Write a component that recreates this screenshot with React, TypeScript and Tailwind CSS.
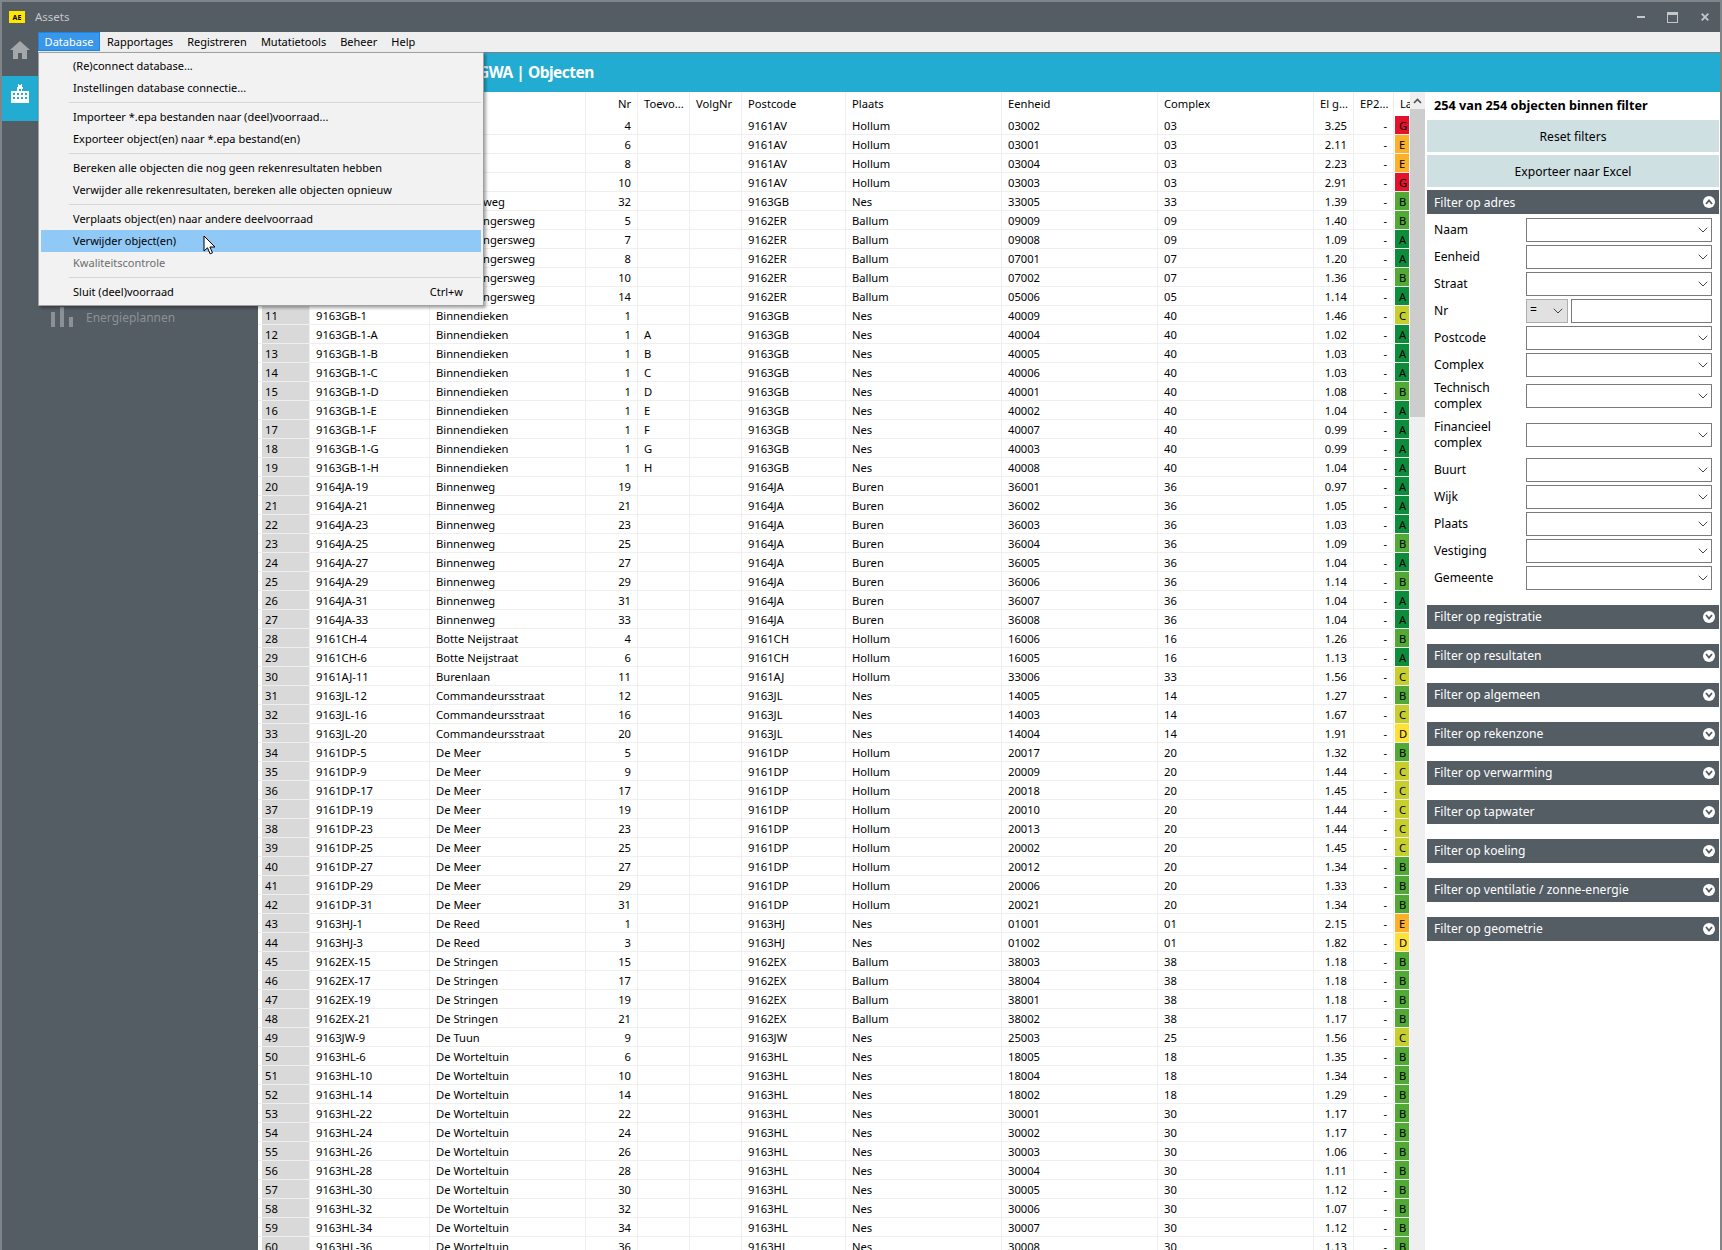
import { ChevronDown } from 'lucide-react';

const FONT = "font-['Noto_Sans','Open_Sans',sans-serif]";

// code|straat|nr|toev|postcode|plaats|eenheid|complex|el|label
const ROWS = [
  '|\u00a0|4||9161AV|Hollum|03002|03|3.25|G',
  '|\u00a0|6||9161AV|Hollum|03001|03|2.11|E',
  '|\u00a0|8||9161AV|Hollum|03004|03|2.23|E',
  '|\u00a0|10||9161AV|Hollum|03003|03|2.91|G',
  '|~weg|32||9163GB|Nes|33005|33|1.39|B',
  '|~ngersweg|5||9162ER|Ballum|09009|09|1.40|B',
  '|~ngersweg|7||9162ER|Ballum|09008|09|1.09|A',
  '|~ngersweg|8||9162ER|Ballum|07001|07|1.20|A',
  '|~ngersweg|10||9162ER|Ballum|07002|07|1.36|B',
  '|~ngersweg|14||9162ER|Ballum|05006|05|1.14|A',
  '9163GB-1|Binnendieken|1||9163GB|Nes|40009|40|1.46|C',
  '9163GB-1-A|Binnendieken|1|A|9163GB|Nes|40004|40|1.02|A',
  '9163GB-1-B|Binnendieken|1|B|9163GB|Nes|40005|40|1.03|A',
  '9163GB-1-C|Binnendieken|1|C|9163GB|Nes|40006|40|1.03|A',
  '9163GB-1-D|Binnendieken|1|D|9163GB|Nes|40001|40|1.08|B',
  '9163GB-1-E|Binnendieken|1|E|9163GB|Nes|40002|40|1.04|A',
  '9163GB-1-F|Binnendieken|1|F|9163GB|Nes|40007|40|0.99|A',
  '9163GB-1-G|Binnendieken|1|G|9163GB|Nes|40003|40|0.99|A',
  '9163GB-1-H|Binnendieken|1|H|9163GB|Nes|40008|40|1.04|A',
  '9164JA-19|Binnenweg|19||9164JA|Buren|36001|36|0.97|A',
  '9164JA-21|Binnenweg|21||9164JA|Buren|36002|36|1.05|A',
  '9164JA-23|Binnenweg|23||9164JA|Buren|36003|36|1.03|A',
  '9164JA-25|Binnenweg|25||9164JA|Buren|36004|36|1.09|B',
  '9164JA-27|Binnenweg|27||9164JA|Buren|36005|36|1.04|A',
  '9164JA-29|Binnenweg|29||9164JA|Buren|36006|36|1.14|B',
  '9164JA-31|Binnenweg|31||9164JA|Buren|36007|36|1.04|A',
  '9164JA-33|Binnenweg|33||9164JA|Buren|36008|36|1.04|A',
  '9161CH-4|Botte Neijstraat|4||9161CH|Hollum|16006|16|1.26|B',
  '9161CH-6|Botte Neijstraat|6||9161CH|Hollum|16005|16|1.13|A',
  '9161AJ-11|Burenlaan|11||9161AJ|Hollum|33006|33|1.56|C',
  '9163JL-12|Commandeursstraat|12||9163JL|Nes|14005|14|1.27|B',
  '9163JL-16|Commandeursstraat|16||9163JL|Nes|14003|14|1.67|C',
  '9163JL-20|Commandeursstraat|20||9163JL|Nes|14004|14|1.91|D',
  '9161DP-5|De Meer|5||9161DP|Hollum|20017|20|1.32|B',
  '9161DP-9|De Meer|9||9161DP|Hollum|20009|20|1.44|C',
  '9161DP-17|De Meer|17||9161DP|Hollum|20018|20|1.45|C',
  '9161DP-19|De Meer|19||9161DP|Hollum|20010|20|1.44|C',
  '9161DP-23|De Meer|23||9161DP|Hollum|20013|20|1.44|C',
  '9161DP-25|De Meer|25||9161DP|Hollum|20002|20|1.45|C',
  '9161DP-27|De Meer|27||9161DP|Hollum|20012|20|1.34|B',
  '9161DP-29|De Meer|29||9161DP|Hollum|20006|20|1.33|B',
  '9161DP-31|De Meer|31||9161DP|Hollum|20021|20|1.34|B',
  '9163HJ-1|De Reed|1||9163HJ|Nes|01001|01|2.15|E',
  '9163HJ-3|De Reed|3||9163HJ|Nes|01002|01|1.82|D',
  '9162EX-15|De Stringen|15||9162EX|Ballum|38003|38|1.18|B',
  '9162EX-17|De Stringen|17||9162EX|Ballum|38004|38|1.18|B',
  '9162EX-19|De Stringen|19||9162EX|Ballum|38001|38|1.18|B',
  '9162EX-21|De Stringen|21||9162EX|Ballum|38002|38|1.17|B',
  '9163JW-9|De Tuun|9||9163JW|Nes|25003|25|1.56|C',
  '9163HL-6|De Worteltuin|6||9163HL|Nes|18005|18|1.35|B',
  '9163HL-10|De Worteltuin|10||9163HL|Nes|18004|18|1.34|B',
  '9163HL-14|De Worteltuin|14||9163HL|Nes|18002|18|1.29|B',
  '9163HL-22|De Worteltuin|22||9163HL|Nes|30001|30|1.17|B',
  '9163HL-24|De Worteltuin|24||9163HL|Nes|30002|30|1.17|B',
  '9163HL-26|De Worteltuin|26||9163HL|Nes|30003|30|1.06|B',
  '9163HL-28|De Worteltuin|28||9163HL|Nes|30004|30|1.11|B',
  '9163HL-30|De Worteltuin|30||9163HL|Nes|30005|30|1.12|B',
  '9163HL-32|De Worteltuin|32||9163HL|Nes|30006|30|1.07|B',
  '9163HL-34|De Worteltuin|34||9163HL|Nes|30007|30|1.12|B',
  '9163HL-36|De Worteltuin|36||9163HL|Nes|30008|30|1.13|B',
];

const LABEL_BG: Record<string, string> = {
  A: 'bg-[#0d8c3c]',
  B: 'bg-[#52a935]',
  C: 'bg-[#c6cf2e]',
  D: 'bg-[#ffe135]',
  E: 'bg-[#fbb12a]',
  G: 'bg-[#e3122d]',
};

const GRID = 'grid grid-cols-[52px_120px_156px_52px_52px_52px_104px_156px_156px_156px_40px_40px_16px]';
const CELL = 'border-r border-[#efefef] px-[6px] truncate';

function Row({ line, index }: { line: string; index: number }) {
  const [code, straat, nr, toev, postcode, plaats, eenheid, complex, el, label] = line.split('|');
  const clipped = straat.startsWith('~');

  return (
    <div className={`${GRID} h-[19px] border-b border-[#efefef] leading-[20px]`}>
      <div className="border-r border-[#efefef] pl-[4px]">
        <div className="h-[18px] bg-[#d9d9d9] pl-[3px]">{index + 1}</div>
      </div>
      <div className={CELL}>{code}</div>
      <div className={`${CELL} ${clipped ? 'pl-[53px]' : ''}`}>{clipped ? straat.slice(1) : straat}</div>
      <div className={`${CELL} text-right`}>{nr}</div>
      <div className={CELL}>{toev}</div>
      <div className={CELL} />
      <div className={CELL}>{postcode}</div>
      <div className={CELL}>{plaats}</div>
      <div className={CELL}>{eenheid}</div>
      <div className={CELL}>{complex}</div>
      <div className={`${CELL} text-right`}>{el}</div>
      <div className={`${CELL} text-right`}>-</div>
      <div className="pl-[1px] pr-[1px]">
        <div className={`h-[18px] overflow-hidden pl-[4px] ${LABEL_BG[label]}`}>{label}</div>
      </div>
    </div>
  );
}

function HeaderCell({ text, right }: { text?: string; right?: boolean }) {
  return <div className={`overflow-hidden whitespace-nowrap border-r border-[#efefef] leading-[24px] ${right ? 'pr-[6px] text-right' : 'pl-[6px]'}`}>{text}</div>;
}

function Table() {
  return (
    <div className="flex-1 overflow-hidden bg-white text-[11.2px] text-black">
      <div className={`${GRID} h-[24px]`}>
        <HeaderCell />
        <HeaderCell />
        <HeaderCell />
        <HeaderCell text="Nr" right />
        <HeaderCell text="Toevo..." />
        <HeaderCell text="VolgNr" />
        <HeaderCell text="Postcode" />
        <HeaderCell text="Plaats" />
        <HeaderCell text="Eenheid" />
        <HeaderCell text="Complex" />
        <HeaderCell text="El g..." />
        <HeaderCell text="EP2..." />
        <div className="overflow-hidden pl-[6px] leading-[24px]">La</div>
      </div>
      {ROWS.map((line, i) => (
        <Row key={i} line={line} index={i} />
      ))}
    </div>
  );
}

function Scrollbar() {
  return (
    <div className="flex w-[15px] flex-col bg-[#efefef]">
      <div className="flex h-[17px] items-center justify-center">
        <svg width="9" height="6" viewBox="0 0 9 6" fill="none" stroke="#505050" strokeWidth="1.6">
          <path d="M1 5l3.5-3.5L8 5" />
        </svg>
      </div>
      <div className="h-[308px] bg-[#cdcdcd]" />
    </div>
  );
}

function Dropdown() {
  return (
    <div className="flex h-[24px] w-[186px] items-center justify-end border border-[#7a7a7a] bg-white">
      <ChevronDown size={16} strokeWidth={1.5} className="text-[#444]" />
    </div>
  );
}

function FilterField({ label, rowClass = 'h-[27px]' }: { label: string; rowClass?: string }) {
  return (
    <div className={`flex items-center leading-[16px] ${rowClass}`}>
      <div className="w-[99px] pl-[7px]">{label}</div>
      <Dropdown />
    </div>
  );
}

function FilterBar({ title, open }: { title: string; open?: boolean }) {
  return (
    <div className="flex h-[24px] items-center justify-between bg-[#545c64] pl-[7px] pr-[4px] text-[12.1px] text-white">
      <span className={open ? 'pt-[2px]' : 'pt-px'}>{title}</span>
      <span className="flex h-[12px] w-[12px] items-center justify-center rounded-full bg-white">
        <svg width="8" height="6" viewBox="0 0 8 6" fill="none" stroke="#545c64" strokeWidth="1.8">
          <path d={open ? 'M1 5l3-3.5L7 5' : 'M1 1l3 3.5L7 1'} />
        </svg>
      </span>
    </div>
  );
}

function FilterPanel() {
  const closed = ['registratie', 'resultaten', 'algemeen', 'rekenzone', 'verwarming', 'tapwater', 'koeling', 'ventilatie / zonne-energie', 'geometrie'];

  return (
    <div className="w-[295px] bg-white pl-[2px] pr-[1px] text-[12.1px] text-black">
      <div className="h-[28px] whitespace-nowrap pl-[7px] text-[12.7px] font-bold leading-[26px]">254 van 254 objecten binnen filter</div>
      <button className="block h-[32px] w-full bg-[#cfe0e3] pt-[2px]">Reset filters</button>
      <button className="mt-[3px] block h-[32px] w-full bg-[#cfe0e3] pt-[2px]">Exporteer naar Excel</button>
      <div className="mt-[3px]">
        <FilterBar title="Filter op adres" open />
      </div>
      <div className="pt-[2px]">
        <FilterField label="Naam" />
        <FilterField label="Eenheid" />
        <FilterField label="Straat" />
        <div className="flex h-[27px] items-center">
          <div className="w-[99px] pl-[7px] pt-px">Nr</div>
          <div className="flex h-[24px] w-[42px] items-center justify-between border border-[#adadad] bg-[#e1e1e1] pl-[3px] pr-[1px]">
            <span>=</span>
            <ChevronDown size={16} strokeWidth={1.5} className="text-[#444]" />
          </div>
          <div className="ml-[3px] h-[24px] w-[141px] border border-[#7a7a7a] bg-white" />
        </div>
        <FilterField label="Postcode" />
        <FilterField label="Complex" />
        <FilterField label="Technisch complex" rowClass="h-[35px]" />
        <FilterField label="Financieel complex" rowClass="my-[2px] h-[39px]" />
        <FilterField label="Buurt" />
        <FilterField label="Wijk" />
        <FilterField label="Plaats" />
        <FilterField label="Vestiging" />
        <FilterField label="Gemeente" />
      </div>
      <div className="mt-[14px] flex flex-col gap-[15px]">
        {closed.map((name) => (
          <FilterBar key={name} title={`Filter op ${name}`} />
        ))}
      </div>
    </div>
  );
}

function MenuItem({ text, shortcut, active, disabled }: { text: string; shortcut?: string; active?: boolean; disabled?: boolean }) {
  return (
    <div
      className={`mx-[2px] flex h-[22px] items-center justify-between pl-[32px] pr-[18px] ${active ? 'bg-[#90c8f6]' : ''} ${disabled ? 'text-[#6d6d6d]' : ''}`}
    >
      <span>{text}</span>
      {shortcut && <span>{shortcut}</span>}
    </div>
  );
}

function MenuSep() {
  return (
    <div className="flex h-[7px] items-center pl-[30px] pr-[2px]">
      <div className="h-px w-full bg-[#d7d7d7]" />
    </div>
  );
}

function DatabaseMenu() {
  return (
    <div className="absolute left-[36px] top-[50px] z-10 h-[254px] w-[446px] border border-[#a0a0a0] bg-[#f2f2f2] pt-[2px] text-[11px] text-black shadow-[2px_2px_3px_rgba(0,0,0,0.35)]">
      <MenuItem text="(Re)connect database..." />
      <MenuItem text="Instellingen database connectie..." />
      <MenuSep />
      <MenuItem text="Importeer *.epa bestanden naar (deel)voorraad..." />
      <MenuItem text="Exporteer object(en) naar *.epa bestand(en)" />
      <MenuSep />
      <MenuItem text="Bereken alle objecten die nog geen rekenresultaten hebben" />
      <MenuItem text="Verwijder alle rekenresultaten, bereken alle objecten opnieuw" />
      <MenuSep />
      <MenuItem text="Verplaats object(en) naar andere deelvoorraad" />
      <MenuItem text="Verwijder object(en)" active />
      <MenuItem text="Kwaliteitscontrole" disabled />
      <MenuSep />
      <MenuItem text="Sluit (deel)voorraad" shortcut="Ctrl+w" />
      {/* muiscursor */}
      <svg className="absolute left-[164px] top-[182px]" width="13" height="20" viewBox="0 0 13 20">
        <path d="M1 1v15l3.5-3.2 2.6 6 2.4-1-2.6-5.8H12z" fill="#fff" stroke="#000" strokeWidth="1" />
      </svg>
    </div>
  );
}

function TitleBar() {
  return (
    <div className="flex h-[30px] items-center justify-between bg-[#545c64] pl-[7px] text-[11.5px] text-[#c4c8cb]">
      <div className="flex items-center">
        <span className="flex h-[12px] w-[16px] items-center justify-center bg-[#ffe600] text-[7px] font-bold leading-none text-black">AE</span>
        <span className="ml-[10px]">Assets</span>
      </div>
      <div className="flex items-center pr-[11px]">
        <svg width="8" height="2" className="mr-[22px]">
          <rect width="8" height="2" fill="#c4c8cb" />
        </svg>
        <svg width="11" height="11" className="mr-[23px]" fill="none" stroke="#c4c8cb">
          <rect x="0.5" y="0.5" width="10" height="10" />
          <rect x="0.5" y="0.5" width="10" height="2" fill="#c4c8cb" />
        </svg>
        <svg width="8" height="8" viewBox="0 0 8 8" stroke="#c4c8cb" strokeWidth="1.8">
          <path d="M.7.7l6.6 6.6M7.3.7L.7 7.3" />
        </svg>
      </div>
    </div>
  );
}

function Rail() {
  return (
    <div className="flex w-[36px] flex-col bg-[#545c64]">
      <div className="flex h-[44px] justify-center pt-[9px]">
        <svg width="20" height="18" viewBox="0 0 20 18" fill="#a4a8ab">
          <path d="M10 0L0 9h3v9h5v-6h4v6h5V9h3z" />
        </svg>
      </div>
      <div className="flex h-[45px] justify-center bg-[#23acd2] pt-[8px]">
        <svg width="18" height="19" viewBox="0 0 18 19" fill="#fff" fillRule="evenodd">
          <path d="M6 3h1V0h1v1h2V0h1v3h1v4h6v12H0V7h6zM8 5v2h2V5zm3 0v2h1V5zM2 9v2h2V9zm4 0v2h2V9zm4 0v2h2V9zm4 0v2h2V9zM2 13v2h2v-2zm4 0v2h2v-2zm4 0v2h2v-2zm4 0v2h2v-2z" />
        </svg>
      </div>
    </div>
  );
}

function MenuBar() {
  const items = ['Rapportages', 'Registreren', 'Mutatietools', 'Beheer', 'Help'];

  return (
    <div className="flex h-[21px] items-stretch border-b border-[#7a7f84] bg-[#efefef] pb-px text-[11px] text-black">
      <div className="flex w-[62px] items-center justify-center border border-[#1d84e6] bg-[#3a96e8] pt-px text-white">Database</div>
      <div className="flex items-center pt-[2px]">
        {items.map((item) => (
          <span key={item} className="px-[7px]">
            {item}
          </span>
        ))}
      </div>
    </div>
  );
}

export default function App() {
  return (
    <div className={`relative h-[1250px] w-[1722px] overflow-hidden border-x-2 border-t-2 border-[#80858a] bg-[#545c64] ${FONT}`}>
      <TitleBar />
      <div className="flex h-[1218px]">
        <Rail />
        <div className="flex flex-1 flex-col">
          <MenuBar />
          <div className="flex min-h-0 flex-1">
            {/* linker navigatie, grotendeels onder het menu */}
            <div className="w-[220px] bg-[#545c64] pl-[13px] pt-[254px] text-[12px] text-[#8b9196]">
              <div className="flex h-[20px] items-center gap-[13px]">
                <svg width="22" height="20" viewBox="0 0 22 20" fill="#8b9196">
                  <rect x="0" y="5" width="4" height="15" />
                  <rect x="9" y="0" width="4" height="20" />
                  <rect x="18" y="10" width="4" height="10" />
                </svg>
                <span className="pt-[2px]">Energieplannen</span>
              </div>
            </div>
            <div className="flex min-w-0 flex-1 flex-col">
              <div className="flex h-[39px] items-center bg-[#23acd2] pl-[220px] text-[15.5px] font-bold tracking-[-0.5px] text-white">GWA | Objecten</div>
              <div className="flex min-h-0 flex-1 bg-white">
                <Table />
                <Scrollbar />
                <FilterPanel />
              </div>
            </div>
          </div>
        </div>
      </div>
      <DatabaseMenu />
    </div>
  );
}
